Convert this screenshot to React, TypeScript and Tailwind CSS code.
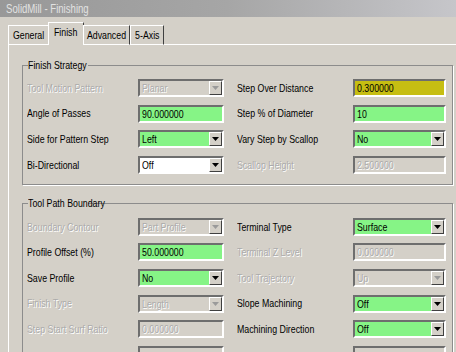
import React from "react";

// --- Types ---
type FieldKind = "text" | "select";
type FieldTone = "green" | "yellow" | "white" | "disabled";

type Field = {
  label: string;
  value: string;
  kind: FieldKind;
  tone: FieldTone;
};

// --- Data ---
const strategyRows: [Field, Field][] = [
  [
    { label: "Tool Motion Pattern", value: "Planar", kind: "select", tone: "disabled" },
    { label: "Step Over Distance", value: "0.300000", kind: "text", tone: "yellow" },
  ],
  [
    { label: "Angle of Passes", value: "90.000000", kind: "text", tone: "green" },
    { label: "Step % of Diameter", value: "10", kind: "text", tone: "green" },
  ],
  [
    { label: "Side for Pattern Step", value: "Left", kind: "select", tone: "green" },
    { label: "Vary Step by Scallop", value: "No", kind: "select", tone: "green" },
  ],
  [
    { label: "Bi-Directional", value: "Off", kind: "select", tone: "white" },
    { label: "Scallop Height", value: "2.500000", kind: "text", tone: "disabled" },
  ],
];

const boundaryRows: [Field, Field][] = [
  [
    { label: "Boundary Contour", value: "Part Profile", kind: "select", tone: "disabled" },
    { label: "Terminal Type", value: "Surface", kind: "select", tone: "green" },
  ],
  [
    { label: "Profile Offset (%)", value: "50.000000", kind: "text", tone: "green" },
    { label: "Terminal Z Level", value: "0.000000", kind: "text", tone: "disabled" },
  ],
  [
    { label: "Save Profile", value: "No", kind: "select", tone: "green" },
    { label: "Tool Trajectory", value: "Up", kind: "select", tone: "disabled" },
  ],
  [
    { label: "Finish Type", value: "Length", kind: "select", tone: "disabled" },
    { label: "Slope Machining", value: "Off", kind: "select", tone: "green" },
  ],
  [
    { label: "Step Start Surf Ratio", value: "0.000000", kind: "text", tone: "disabled" },
    { label: "Machining Direction", value: "Off", kind: "select", tone: "green" },
  ],
  [
    { label: "", value: "", kind: "text", tone: "disabled" },
    { label: "", value: "", kind: "text", tone: "disabled" },
  ],
];

const tabs = [
  { label: "General", active: false, w: "w-[41px]" },
  { label: "Finish", active: true, w: "w-[36px]" },
  { label: "Advanced", active: false, w: "w-[47px]" },
  { label: "5-Axis", active: false, w: "w-[34px]" },
];

const toneBg: Record<FieldTone, string> = {
  green: "bg-[#86f486]",
  yellow: "bg-[#c6be12]",
  white: "bg-white",
  disabled: "bg-[#d4d0c8]",
};

const dimText = "text-[#ababab] [text-shadow:1px_1px_0_#fff]";

// Arial Narrow look: Liberation Sans squeezed horizontally
const Narrow = ({ children, center }: { children: React.ReactNode; center?: boolean }) => (
  <span
    className={`inline-block whitespace-nowrap scale-x-[0.8] ${center ? "origin-center" : "origin-left"}`}
  >
    {children}
  </span>
);

// --- Pieces ---
const DropButton = ({ disabled }: { disabled: boolean }) => (
  <div className="flex h-full w-[13px] shrink-0 items-center justify-center border border-t-white border-l-white border-r-[#404040] border-b-[#404040] bg-[#d4d0c8]">
    <svg width="7" height="4" viewBox="0 0 7 4">
      <path d="M0 0h7L3.5 4z" fill={disabled ? "#9a9a9a" : "#000"} />
    </svg>
  </div>
);

const Box = ({ field, width }: { field: Field; width: string }) => {
  const disabled = field.tone === "disabled";
  return (
    <div
      className={`flex h-[18px] ${width} shrink-0 items-stretch border-2 border-t-[#6e6e6e] border-l-[#6e6e6e] border-r-white border-b-white ${toneBg[field.tone]}`}
    >
      <div className={`flex-1 overflow-hidden pl-[2px] leading-[14px] ${disabled ? dimText : "text-black"}`}>
        <Narrow>{field.value}</Narrow>
      </div>
      {field.kind === "select" && <DropButton disabled={disabled} />}
    </div>
  );
};

const Cell = ({ field, labelW, boxW }: { field: Field; labelW: string; boxW: string }) => {
  const disabled = field.tone === "disabled";
  return (
    <div className="flex items-center">
      <div className={`${labelW} shrink-0 ${disabled ? dimText : "text-black"}`}>
        <Narrow>{field.label}</Narrow>
      </div>
      <Box field={field} width={boxW} />
    </div>
  );
};

const Group = ({
  title,
  rows,
  className,
}: {
  title: string;
  rows: [Field, Field][];
  className: string;
}) => (
  <div className={`relative border border-[#8c8c8c] shadow-[1px_1px_0_#fff] ${className}`}>
    <span className="absolute -top-[7px] left-[5px] w-[60px] bg-[#d4d0c8] leading-[12px] text-black">
      <Narrow>{title}</Narrow>
    </span>
    <div className="flex flex-col gap-[7.6px] pl-[4px]">
      {rows.map(([a, b], i) => (
        <div key={i} className="flex">
          <Cell field={a} labelW="w-[111px]" boxW="w-[86px]" />
          <div className="w-[13px]" />
          <Cell field={b} labelW="w-[116px]" boxW="w-[93px]" />
        </div>
      ))}
    </div>
  </div>
);

// --- Main ---
export default function App() {
  return (
    <div className="h-[352px] w-[456px] overflow-hidden bg-[#d4d0c8] font-['Liberation_Sans',Arial,sans-serif] text-[11px]">
      {/* Title bar */}
      <div className="flex h-[17px] items-center bg-gradient-to-r from-[#989898] via-[#a6a6a6] to-[#c6c6ca] pl-[6px] text-[12px] leading-[12px] text-[#e2e2e2]">
        <Narrow>SolidMill - Finishing</Narrow>
      </div>

      {/* Tabs */}
      <div className="flex h-[28px] items-end pl-[8px]">
        {tabs.map((t) => (
          <div
            key={t.label}
            className={`flex ${t.w} items-center justify-center border-l border-t border-r border-l-white border-t-white border-r-[#404040] ${
              t.active ? "-mx-[1px] h-[23px] bg-[#d4d0c8] pb-[3px]" : "h-[20px] border-b border-b-white"
            }`}
          >
            <Narrow center>{t.label}</Narrow>
          </div>
        ))}
        <div className="flex-1 border-b border-white" />
      </div>

      {/* Page */}
      <div className="ml-[8px] h-full border-l border-white pt-[20px] pl-[13px]">
        <Group title="Finish Strategy" rows={strategyRows} className="w-[431px] pt-[13px] pb-[10px]" />
        <Group title="Tool Path Boundary" rows={boundaryRows} className="mt-[18px] w-[431px] pt-[14px]" />
      </div>
    </div>
  );
}
